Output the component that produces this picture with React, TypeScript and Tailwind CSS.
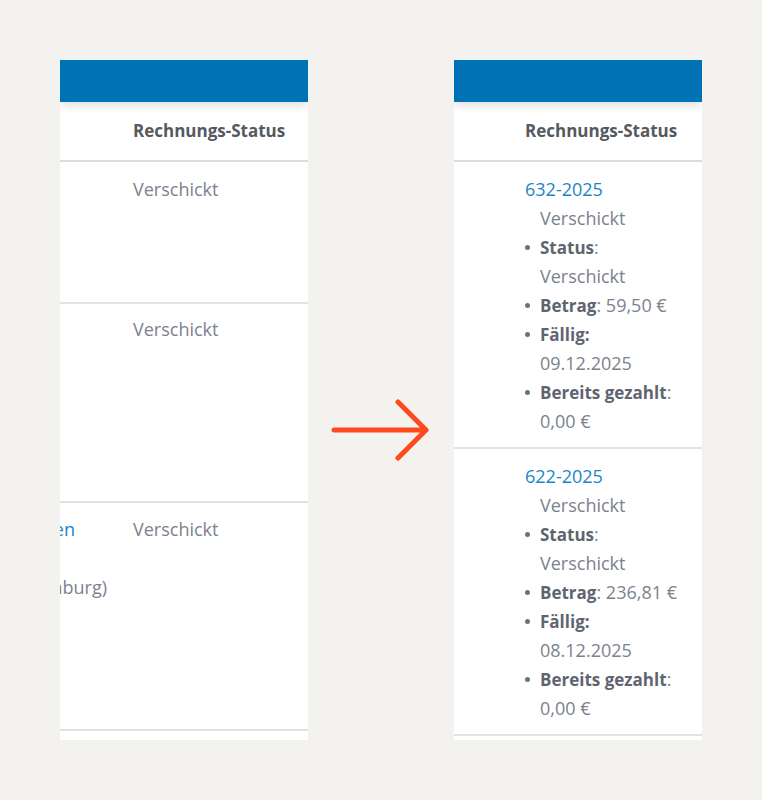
import * as React from "react";

type Invoice = {
  nr: string;
  status: string;
  betrag: string;
  faellig: string;
  gezahlt: string;
};

const invoices: Invoice[] = [
  { nr: "632-2025", status: "Verschickt", betrag: "59,50 €", faellig: "09.12.2025", gezahlt: "0,00 €" },
  { nr: "622-2025", status: "Verschickt", betrag: "236,81 €", faellig: "08.12.2025", gezahlt: "0,00 €" },
];

const font = { fontFamily: '"Open Sans", "Noto Sans", sans-serif' };

function PanelHead({ offset }: { offset: string }) {
  return (
    <>
      <div className="relative z-10 h-[42px] shrink-0 bg-[#0073b7] shadow-[0_3px_10px_rgba(0,0,0,0.14)]" />
      <div className="flex h-[60px] shrink-0 items-center border-b-2 border-[#dcdcdc]">
        <div className={offset} />
        <span className="whitespace-nowrap text-[17px] font-bold text-[#555a60]">Rechnungs-Status</span>
      </div>
    </>
  );
}

function Bullet({ children }: { children: React.ReactNode }) {
  return (
    <li className="flex">
      <span className="flex h-[29px] w-[15px] shrink-0 items-center">
        <span className="h-[5px] w-[5px] rounded-full bg-[#6b7280]" />
      </span>
      <div>{children}</div>
    </li>
  );
}

function Label({ children }: { children: React.ReactNode }) {
  return <b className="text-[17px] text-[#5f6570]">{children}</b>;
}

function BeforeView() {
  return (
    <div className="flex h-[680px] w-[248px] shrink-0 flex-col overflow-hidden bg-white">
      <PanelHead offset="w-[73px] shrink-0" />
      <div className="flex h-[142px] shrink-0 border-b-2 border-[#e2e2e2] pt-[13px] leading-[29px]">
        <div className="w-[73px] shrink-0" />
        <span className="text-[#7b828e]">Verschickt</span>
      </div>
      <div className="flex h-[199px] shrink-0 border-b-2 border-[#e2e2e2] pt-[11px] leading-[29px]">
        <div className="w-[73px] shrink-0" />
        <span className="text-[#7b828e]">Verschickt</span>
      </div>
      <div className="flex h-[228px] shrink-0 border-b-2 border-[#e2e2e2] pt-[12px] leading-[29px]">
        <div className="w-[65px] shrink-0 overflow-hidden">
          <div className="flex justify-end whitespace-nowrap pr-[50px] text-[#1a85c8]">
            <span>Physiotherapie Nielsen</span>
          </div>
          <div className="h-[29px]" />
          <div className="flex justify-end whitespace-nowrap pr-[18px] text-[#7b828e]">
            <span>(Hamburg)</span>
          </div>
        </div>
        <div className="w-[8px] shrink-0" />
        <span className="text-[#7b828e]">Verschickt</span>
      </div>
    </div>
  );
}

function AfterView() {
  return (
    <div className="flex h-[680px] w-[248px] shrink-0 flex-col overflow-hidden bg-white">
      <PanelHead offset="w-[71px] shrink-0" />
      {invoices.map((inv) => (
        <div
          key={inv.nr}
          className="flex h-[287px] shrink-0 border-b-2 border-[#e2e2e2] pt-[13px] leading-[29px]"
        >
          <div className="w-[71px] shrink-0" />
          <div className="whitespace-nowrap text-[#7b828e]">
            <a className="text-[#1a85c8]">{inv.nr}</a>
            <div className="pl-[15px]">{inv.status}</div>
            <ul>
              <Bullet>
                <Label>Status</Label>:<br />
                {inv.status}
              </Bullet>
              <Bullet>
                <Label>Betrag</Label>: {inv.betrag}
              </Bullet>
              <Bullet>
                <Label>Fällig:</Label>
                <br />
                {inv.faellig}
              </Bullet>
              <Bullet>
                <Label>Bereits gezahlt</Label>:<br />
                {inv.gezahlt}
              </Bullet>
            </ul>
          </div>
        </div>
      ))}
    </div>
  );
}

export default function App() {
  return (
    <div className="flex h-[800px] w-[762px] bg-[#f3f2ef] pl-[60px] pt-[60px] text-[18px]" style={font}>
      <BeforeView />
      <div className="flex w-[146px] shrink-0 items-center justify-center">
        <svg width="100" height="62" viewBox="0 0 100 62" fill="none">
          <path
            d="M3 31H95M67 3L95 31L67 59"
            stroke="#ff4a1e"
            strokeWidth="5"
            strokeLinecap="round"
            strokeLinejoin="round"
          />
        </svg>
      </div>
      <AfterView />
    </div>
  );
}
